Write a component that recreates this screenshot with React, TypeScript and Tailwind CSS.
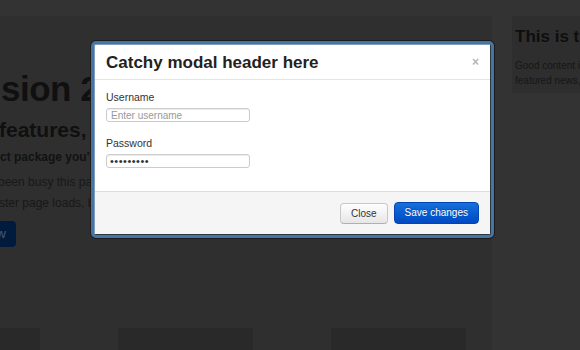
import React from "react";

export default function App() {
  return (
    <div className="relative w-[580px] h-[350px] overflow-hidden bg-[#333333] font-['Liberation_Sans',Arial,sans-serif]">
      <div className="flex h-full pt-[16px]">
        {/* main column */}
        <main className="w-[492px] h-full bg-[#2f2f2f] flex flex-col overflow-hidden">
          <h1 className="mt-[55px] ml-[1px] text-[35px] leading-[35px] font-bold text-[#101010] whitespace-nowrap tracking-[-0.5px]">
            sion 2.0
          </h1>
          <h2 className="mt-[13px] ml-[-1px] text-[21px] leading-[21px] font-bold text-[#101010] whitespace-nowrap">
            features, and more
          </h2>
          <p className="mt-[9px] ml-[0px] text-[12px] leading-[16px] font-bold text-[#121212] whitespace-nowrap">
            ct package you'll love
          </p>
          <p className="mt-[7px] ml-[-2px] text-[12px] leading-[21px] text-[#181818] whitespace-nowrap">
            been busy this past year
            <br />
            <span className="ml-[1px]">ster page loads, better docs</span>
          </p>
          <div className="mt-[7px] ml-[-40px] w-[56px] h-[26px] rounded-[4px] bg-[#001b3e] text-right pr-[10px] text-[13px] leading-[26px] text-[#46597a]">
            w
          </div>
          <div className="mt-[81px] ml-[-95px] flex gap-[78px]">
            <div className="w-[135px] h-[30px] bg-[#292929]" />
            <div className="w-[135px] h-[30px] bg-[#292929]" />
            <div className="w-[135px] h-[30px] bg-[#292929]" />
          </div>
        </main>
        {/* sidebar */}
        <aside className="flex-1 pl-[20px] overflow-hidden">
          <div className="mt-[-1px] bg-[#2e2e2e] pl-[3px] pt-[11px] pb-[5px] w-[120px]">
            <h3 className="text-[17px] leading-[22px] font-bold text-[#0e0e0e] whitespace-nowrap">
              This is the sidebar
            </h3>
            <p className="mt-[10px] text-[10px] leading-[15px] text-[#161616] whitespace-nowrap">
              Good content in here
              <br />
              featured news, etc.
            </p>
          </div>
        </aside>
      </div>

      {/* modal */}
      <div className="absolute left-[91px] top-[41px] w-[403px] h-[197px] p-[3px] rounded-[5px] bg-[#4575a5] shadow-[0_0_0_1px_#1c1c1c]">
        <div className="w-full h-full flex flex-col bg-white border border-[#7f9cbb] border-r-[#2e3640] border-b-[#2e3640] rounded-[2px] overflow-hidden">
          <div className="h-[35px] shrink-0 flex items-center justify-between pl-[11px] pr-[11px] border-b border-[#e5e5e5]">
            <span className="text-[17px] leading-[20px] font-bold text-[#222222] pt-[1px]">
              Catchy modal header here
            </span>
            <span className="text-[12px] leading-[12px] font-bold text-[#b5b5b5]">×</span>
          </div>
          <div className="flex-1 px-[11px] pt-[11px]">
            <div className="text-[10.5px] leading-[12px] text-[#333333]">Username</div>
            <input
              className="mt-[5px] block w-[144px] h-[14px] px-[4px] border border-[#cccccc] rounded-[3px] shadow-[inset_0_1px_1px_rgba(0,0,0,0.08)] text-[10px] leading-[12px] text-[#555] placeholder:text-[#999999] outline-none bg-white"
              placeholder="Enter username"
            />
            <div className="mt-[15px] text-[10.5px] leading-[12px] text-[#333333]">Password</div>
            <input
              readOnly
              value="•••••••••"
              className="mt-[5px] block w-[144px] h-[14px] px-[3px] border border-[#cccccc] rounded-[3px] shadow-[inset_0_1px_1px_rgba(0,0,0,0.08)] text-[11px] leading-[12px] tracking-[0.5px] text-[#333333] outline-none bg-white"
            />
          </div>
          <div className="h-[43px] shrink-0 flex items-center justify-end gap-[6px] pr-[11px] bg-[#f5f5f5] border-t border-[#dddddd]">
            <button className="h-[21px] px-[10px] rounded-[4px] border border-[#c8c8c8] border-b-[#b0b0b0] bg-gradient-to-b from-white to-[#e6e6e6] text-[10px] leading-[19px] text-[#333333] shadow-[inset_0_1px_0_rgba(255,255,255,0.3)]">
              Close
            </button>
            <button className="h-[22px] px-[10px] rounded-[4px] border border-[#0046b0] bg-gradient-to-b from-[#1670dc] to-[#0049c4] text-[10px] leading-[20px] text-white [text-shadow:0_-1px_0_rgba(0,0,0,0.25)]">
              Save changes
            </button>
          </div>
        </div>
      </div>
    </div>
  );
}
